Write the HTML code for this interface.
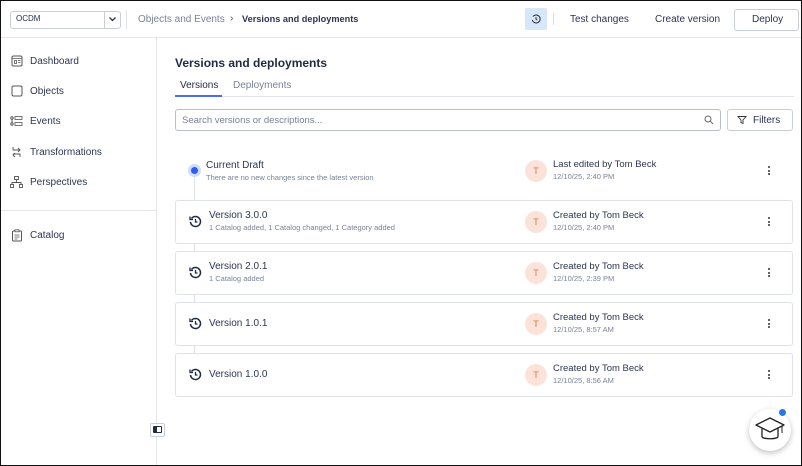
<!DOCTYPE html>
<html><head><meta charset="utf-8"><style>
*{box-sizing:border-box;margin:0;padding:0}
body{width:802px;height:466px;overflow:hidden;font-family:"Liberation Sans",sans-serif;color:#1f2a44;background:#fff}
.frame{position:absolute;left:0;top:0;width:802px;height:466px;border:1px solid #111;}
.abs{position:absolute}
.hdr{left:1px;top:1px;width:800px;height:37px;border-bottom:1px solid #e3e5ea}
.sb{left:1px;top:38px;width:156px;height:427px;border-right:1px solid #e3e5ea}
.t{position:absolute;white-space:nowrap}
.nav{font-size:10px;color:#2d3650}
.card{position:absolute;left:175px;width:618px;height:44px;border:1px solid #dfe2e8;border-radius:3px;background:#fff}
.av{position:absolute;left:525px;width:22px;height:22px;border-radius:50%;background:#fbe3da;color:#d9774f;font-size:9px;text-align:center;line-height:22px}
.name{font-size:9.5px;color:#2d3650}
.date{font-size:7.5px;color:#7a8296}
.keb{position:absolute;left:768px;width:3px}
.keb i{display:block;width:2px;height:2px;background:#333;margin-bottom:1.5px;border-radius:1px}
</style></head><body>
<div class="frame"></div>
<div class="abs hdr"></div>
<div class="abs" style="left:10px;top:11px;width:111px;height:18px;border:1px solid #c9cdd6;border-radius:3px"></div>
<div class="abs" style="left:104px;top:11px;width:1px;height:18px;background:#c9cdd6"></div>
<div class="t" style="left:16px;top:14px;font-size:8px">OCDM</div>
<svg class="abs" style="left:108px;top:16px" width="9" height="7"><path d="M1.5 1.5L4.5 4.5L7.5 1.5" stroke="#333" stroke-width="1.3" fill="none"/></svg>
<div class="abs" style="left:126px;top:11px;width:1px;height:18px;background:#e0e2e7"></div>
<div class="t" style="left:138px;top:14px;font-size:10px;color:#7a8296">Objects and Events</div>
<div class="t" style="left:230px;top:13px;font-size:10px;color:#555">›</div>
<div class="t" style="left:242px;top:14px;font-size:9.2px;font-weight:bold;color:#2d3650">Versions and deployments</div>
<div class="abs" style="left:525px;top:8px;width:22px;height:22px;background:#d6e6fb;border-radius:2px"></div>
<svg class="abs" style="left:531px;top:14px" width="10" height="10" viewBox="0 0 10 10"><path d="M2 2.5A4 4 0 1 1 1.3 6" stroke="#333" fill="none" stroke-width="1"/><path d="M5 3v2.2l1.3 .8" stroke="#333" fill="none" stroke-width="1"/></svg>
<div class="abs" style="left:553px;top:13px;width:1px;height:12px;background:#ddd"></div>
<div class="t" style="left:570px;top:14px;font-size:10px;color:#2d3650">Test changes</div>
<div class="t" style="left:655px;top:14px;font-size:10px;color:#2d3650">Create version</div>
<div class="abs" style="left:734px;top:9px;width:65px;height:22px;border:1px solid #c9cdd6;border-radius:3px"></div>
<div class="t" style="left:752px;top:14px;font-size:10px;color:#2d3650">Deploy</div>

<div class="abs sb"></div>
<svg class="abs" style="left:11px;top:55px" width="12" height="12"><rect x="1" y="1" width="10" height="10" rx="1.5" stroke="#555" fill="none"/><path d="M1 3.5h10M3.5 5.5h2v3h-2zM7 5.5h2.5M7 7.5h2.5" stroke="#555" stroke-width=".8" fill="none"/></svg>
<div class="t nav" style="left:30px;top:56px">Dashboard</div>
<svg class="abs" style="left:11px;top:85px" width="12" height="12"><rect x="1" y="1" width="10" height="10" rx="1.5" stroke="#555" fill="none"/></svg>
<div class="t nav" style="left:30px;top:86px">Objects</div>
<svg class="abs" style="left:10px;top:115px" width="13" height="12"><circle cx="2" cy="3" r="1.2" stroke="#555" fill="none"/><circle cx="2" cy="9" r="1.2" stroke="#555" fill="none"/><rect x="5" y="1.5" width="7" height="3" stroke="#555" fill="none" stroke-width=".8"/><rect x="5" y="7.5" width="7" height="3" stroke="#555" fill="none" stroke-width=".8"/><path d="M2 4.2v3.6" stroke="#555"/></svg>
<div class="t nav" style="left:30px;top:116px">Events</div>
<svg class="abs" style="left:10px;top:146px" width="13" height="12"><path d="M3 1v3h7M8 2l2 2-2 2M10 11V8H3M5 7l-2 2 2 2" stroke="#555" fill="none" stroke-width=".9"/></svg>
<div class="t nav" style="left:30px;top:147px">Transformations</div>
<svg class="abs" style="left:10px;top:176px" width="13" height="12"><rect x="4.5" y="0.5" width="4" height="3" stroke="#555" fill="none" stroke-width=".9"/><path d="M6.5 3.5v3M2 9V6.5h9V9" stroke="#555" fill="none" stroke-width=".9"/><rect x="0.5" y="8.5" width="3" height="3" stroke="#555" fill="none" stroke-width=".9"/><rect x="9.5" y="8.5" width="3" height="3" stroke="#555" fill="none" stroke-width=".9"/></svg>
<div class="t nav" style="left:30px;top:177px">Perspectives</div>
<div class="abs" style="left:1px;top:210px;width:156px;height:1px;background:#e3e5ea"></div>
<svg class="abs" style="left:11px;top:229px" width="12" height="13"><rect x="1.5" y="2" width="9" height="10" rx="1" stroke="#555" fill="none"/><rect x="4" y="0.8" width="4" height="2" fill="#fff" stroke="#555" stroke-width=".8"/><path d="M3.5 6h5M3.5 8h5M3.5 10h3" stroke="#555" stroke-width=".8"/></svg>
<div class="t nav" style="left:30px;top:230px">Catalog</div>
<div class="abs" style="left:150px;top:423px;width:15px;height:14px;border:1px solid #c9cdd6;border-radius:2px;background:#fff"></div>
<div class="abs" style="left:153px;top:426px;width:9px;height:7px;background:#1f2a44;border-radius:1px"></div>
<div class="abs" style="left:157px;top:427px;width:4px;height:5px;background:#fff"></div>

<div class="t" style="left:175px;top:56px;font-size:12px;font-weight:bold;color:#1f2a44">Versions and deployments</div>
<div class="t" style="left:180px;top:80px;font-size:10px;color:#1f2a44">Versions</div>
<div class="t" style="left:233px;top:80px;font-size:10px;color:#7a8296">Deployments</div>
<div class="abs" style="left:175px;top:96px;width:619px;height:1px;background:#e3e5ea"></div>
<div class="abs" style="left:175px;top:95px;width:47px;height:2px;background:#4a6cf0"></div>
<div class="abs" style="left:175px;top:109px;width:546px;height:22px;border:1px solid #b9bec9;border-radius:3px"></div>
<div class="t" style="left:182px;top:115px;font-size:9.5px;color:#7a8296">Search versions or descriptions...</div>
<svg class="abs" style="left:704px;top:115px" width="10" height="10"><circle cx="4" cy="4" r="3" stroke="#666" fill="none"/><path d="M6.3 6.3L9 9" stroke="#666"/></svg>
<div class="abs" style="left:727px;top:109px;width:66px;height:22px;border:1px solid #c9cdd6;border-radius:3px"></div>
<svg class="abs" style="left:737px;top:115px" width="10" height="10"><path d="M1 1.5h8L6 5v3.5L4 7.5V5z" stroke="#333" fill="none" stroke-width=".9"/></svg>
<div class="t" style="left:753px;top:115px;font-size:10px;color:#2d3650">Filters</div>

<div class="abs" style="left:194px;top:176px;width:1px;height:190px;background:#dfe2e8"></div>
<div class="abs" style="left:188px;top:164px;width:13px;height:13px;border-radius:50%;background:#cfdcfb"></div>
<div class="abs" style="left:191px;top:167px;width:7px;height:7px;border-radius:50%;background:#2f5cf0"></div>
<div class="t" style="left:206px;top:160px;font-size:10px;color:#2d3650">Current Draft</div>
<div class="t" style="left:206px;top:173px;font-size:7.5px;color:#7a8296">There are no new changes since the latest version</div>
<div class="av" style="top:160px">T</div>
<div class="t name" style="left:553px;top:159px">Last edited by Tom Beck</div>
<div class="t date" style="left:553px;top:172px">12/10/25, 2:40 PM</div>
<div class="keb" style="top:166px"><i></i><i></i><i></i></div>

<div class="card" style="top:200px"></div>
<div class="card" style="top:251px"></div>
<div class="card" style="top:302px"></div>
<div class="card" style="top:353px"></div>

<svg class="abs" style="left:189px;top:215px" width="13" height="13" viewBox="0 0 13 13"><path d="M2.5 3.5A5 5 0 1 1 1.5 7" stroke="#1f2a44" stroke-width="1.5" fill="none"/><path d="M6.5 4v3h2" stroke="#1f2a44" stroke-width="1.3" fill="none"/><path d="M1 1.5v3h3" stroke="#1f2a44" stroke-width="1.3" fill="none"/></svg>
<svg class="abs" style="left:189px;top:266px" width="13" height="13" viewBox="0 0 13 13"><path d="M2.5 3.5A5 5 0 1 1 1.5 7" stroke="#1f2a44" stroke-width="1.5" fill="none"/><path d="M6.5 4v3h2" stroke="#1f2a44" stroke-width="1.3" fill="none"/><path d="M1 1.5v3h3" stroke="#1f2a44" stroke-width="1.3" fill="none"/></svg>
<svg class="abs" style="left:189px;top:317px" width="13" height="13" viewBox="0 0 13 13"><path d="M2.5 3.5A5 5 0 1 1 1.5 7" stroke="#1f2a44" stroke-width="1.5" fill="none"/><path d="M6.5 4v3h2" stroke="#1f2a44" stroke-width="1.3" fill="none"/><path d="M1 1.5v3h3" stroke="#1f2a44" stroke-width="1.3" fill="none"/></svg>
<svg class="abs" style="left:189px;top:368px" width="13" height="13" viewBox="0 0 13 13"><path d="M2.5 3.5A5 5 0 1 1 1.5 7" stroke="#1f2a44" stroke-width="1.5" fill="none"/><path d="M6.5 4v3h2" stroke="#1f2a44" stroke-width="1.3" fill="none"/><path d="M1 1.5v3h3" stroke="#1f2a44" stroke-width="1.3" fill="none"/></svg>

<div class="t" style="left:209px;top:210px;font-size:10px;color:#2d3650">Version 3.0.0</div>
<div class="t" style="left:209px;top:223px;font-size:7.5px;color:#7a8296">1 Catalog added, 1 Catalog changed, 1 Category added</div>
<div class="av" style="top:211px">T</div>
<div class="t name" style="left:553px;top:210px">Created by Tom Beck</div>
<div class="t date" style="left:553px;top:223px">12/10/25, 2:40 PM</div>
<div class="keb" style="top:217px"><i></i><i></i><i></i></div>

<div class="t" style="left:209px;top:261px;font-size:10px;color:#2d3650">Version 2.0.1</div>
<div class="t" style="left:209px;top:274px;font-size:7.5px;color:#7a8296">1 Catalog added</div>
<div class="av" style="top:262px">T</div>
<div class="t name" style="left:553px;top:261px">Created by Tom Beck</div>
<div class="t date" style="left:553px;top:274px">12/10/25, 2:39 PM</div>
<div class="keb" style="top:268px"><i></i><i></i><i></i></div>

<div class="t" style="left:209px;top:318px;font-size:10px;color:#2d3650">Version 1.0.1</div>
<div class="av" style="top:313px">T</div>
<div class="t name" style="left:553px;top:312px">Created by Tom Beck</div>
<div class="t date" style="left:553px;top:325px">12/10/25, 8:57 AM</div>
<div class="keb" style="top:319px"><i></i><i></i><i></i></div>

<div class="t" style="left:209px;top:369px;font-size:10px;color:#2d3650">Version 1.0.0</div>
<div class="av" style="top:364px">T</div>
<div class="t name" style="left:553px;top:363px">Created by Tom Beck</div>
<div class="t date" style="left:553px;top:376px">12/10/25, 8:56 AM</div>
<div class="keb" style="top:370px"><i></i><i></i><i></i></div>

<div class="abs" style="left:749px;top:409px;width:42px;height:42px;border-radius:50%;background:#fff;box-shadow:0 2px 6px rgba(0,0,0,.25)"></div>
<svg class="abs" style="left:753px;top:415px" width="34" height="30" viewBox="0 0 34 30"><path d="M17 3L31 10L17 17L3 10Z" stroke="#222" stroke-width="1.3" fill="none" stroke-linejoin="round"/><path d="M9 13.5v8c0 3 16 3 16 0v-8" stroke="#222" stroke-width="1.3" fill="none"/><path d="M29 11v7" stroke="#222" stroke-width="1"/></svg>
<div class="abs" style="left:779px;top:409px;width:7px;height:7px;border-radius:50%;background:#2a77e0"></div>
</body></html>
